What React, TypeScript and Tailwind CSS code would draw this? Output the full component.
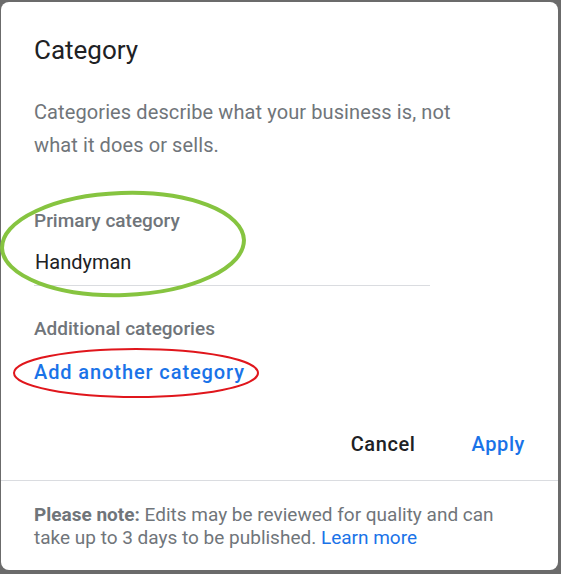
import React from 'react'

const font = { fontFamily: 'Roboto, "Liberation Sans", sans-serif' }

function Annotations() {
  return (
    <svg className="pointer-events-none absolute left-0 top-0" width="561" height="574">
      <ellipse cx="123" cy="244" rx="121" ry="51" fill="none" stroke="#86c440" strokeWidth="4" transform="rotate(-2 123 244)" />
      <ellipse cx="136" cy="373" rx="122" ry="24" fill="none" stroke="#e0161c" strokeWidth="2" />
    </svg>
  )
}

export default function App() {
  return (
    <div className="relative h-[574px] w-[561px] bg-[#6b6b6b] pb-[4px] pl-[1px] pr-[3px] pt-[2px]" style={font}>
      <div className="flex h-full flex-col rounded-lg bg-white">
        <div className="px-[33px]">
          <h1 className="mt-[32px] text-[26px] leading-[32px] text-[#202124]">Category</h1>
          <p className="mt-[30px] text-[20px] leading-[33px] tracking-[0.1px] text-[#70757a]">
            Categories describe what your business is, not
            <br />
            what it does or sells.
          </p>

          <div className="mt-[47px] w-[396px]">
            <div className="text-[19px] font-medium leading-[24px] text-[#70757a]">Primary category</div>
            <div className="mt-[16px] pb-[10px] pl-[1px] text-[20px] leading-[26px] text-[#202124]">Handyman</div>
            <div className="h-px bg-[#dadce0]" />
          </div>

          <div className="mt-[31px] text-[19px] font-medium leading-[24px] text-[#70757a]">Additional categories</div>
          <button className="mt-[19px] block text-[20px] font-medium leading-[24px] tracking-[0.9px] text-[#1a73e8]">
            Add another category
          </button>
        </div>

        <div className="mt-[48px] flex items-center justify-end gap-[56px] pr-[33px]">
          <button className="text-[20px] font-medium leading-[24px] tracking-[0.6px] text-[#202124]">Cancel</button>
          <button className="text-[20px] font-medium leading-[24px] tracking-[0.6px] text-[#1a73e8]">Apply</button>
        </div>

        <div className="mt-[24px] h-px bg-[#dadce0]" />

        <p className="px-[33px] pt-[22px] text-[19px] leading-[23px] text-[#70757a]">
          <span className="font-bold">Please note:</span> Edits may be reviewed for quality and can
          <br />
          take up to 3 days to be published. <span className="text-[#1a73e8]">Learn more</span>
        </p>
      </div>
      <Annotations />
    </div>
  )
}
